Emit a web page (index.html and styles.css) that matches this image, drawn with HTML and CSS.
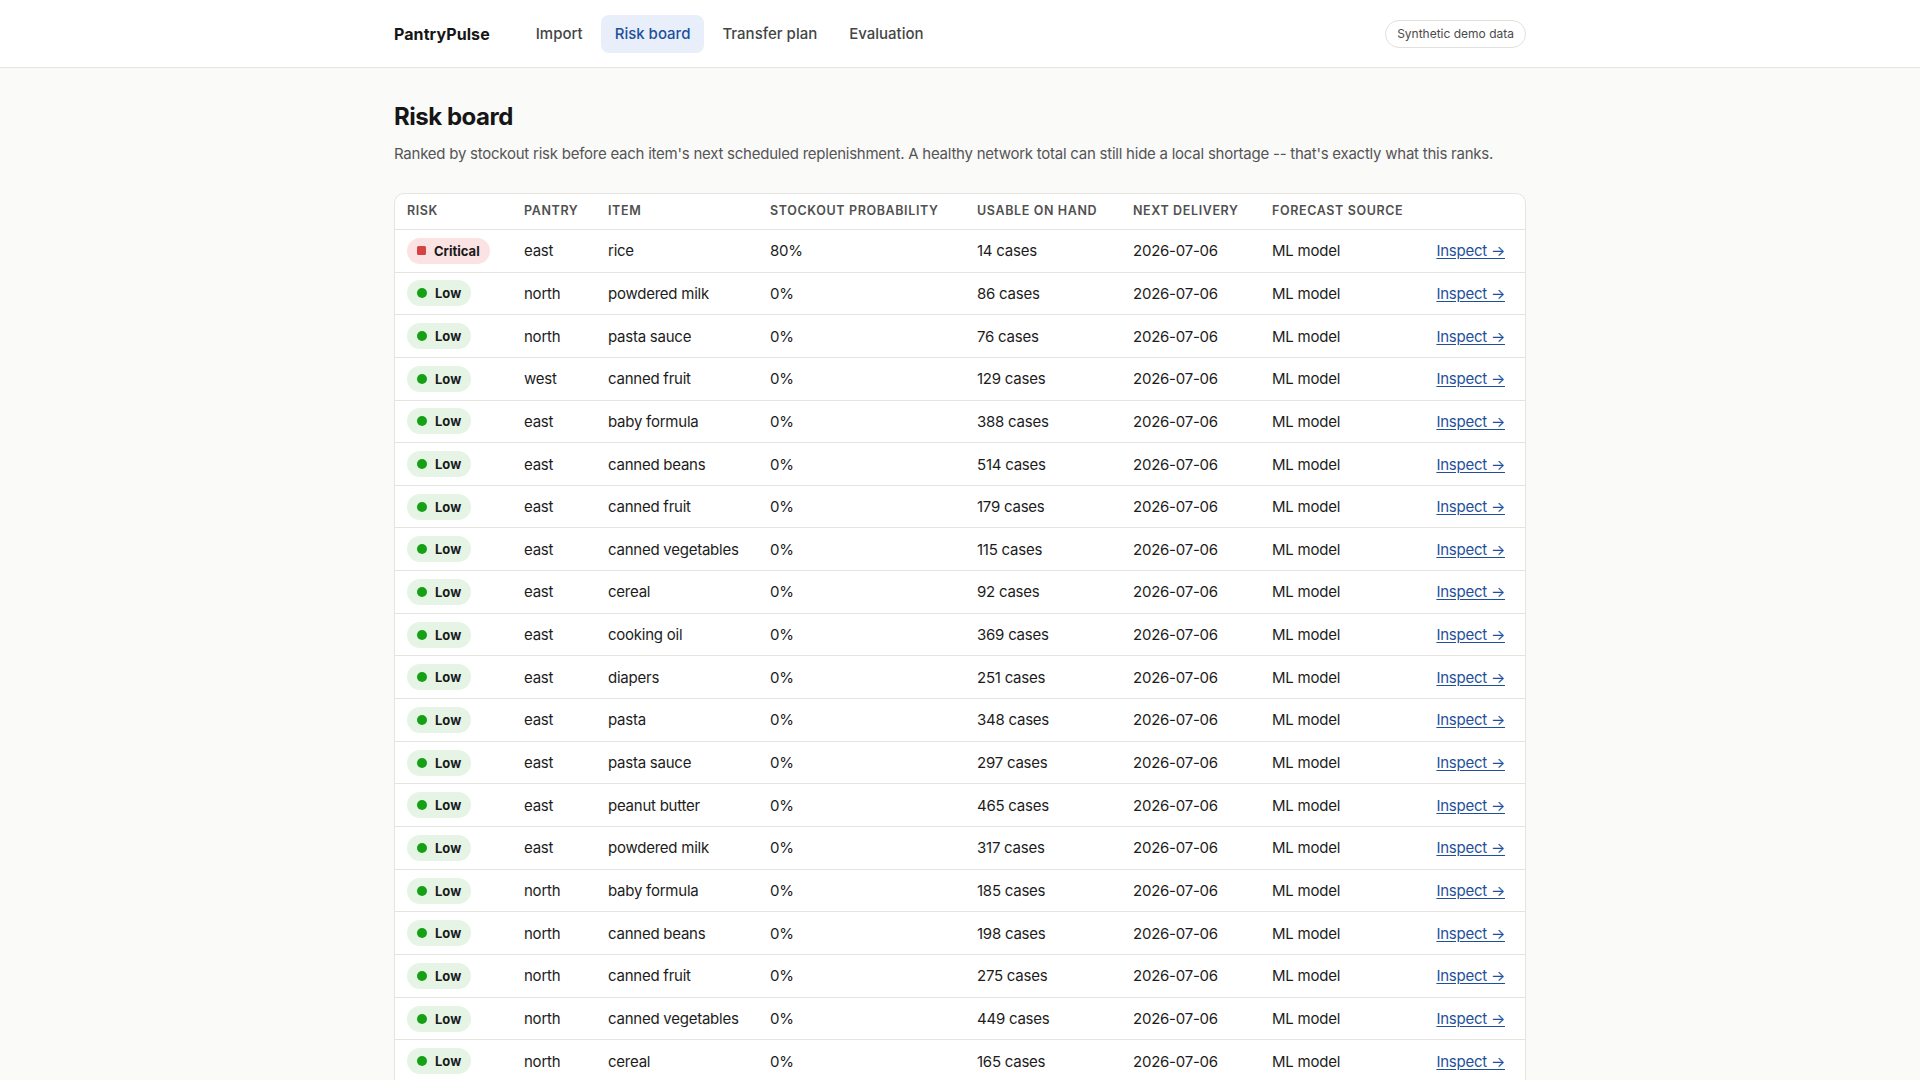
FILE: index.html
```html
<!DOCTYPE html>
<html lang="en">

<head>
    <meta charset="UTF-8">
    <meta name="viewport" content="width=device-width, initial-scale=1.0">
    <link rel="stylesheet" href="styles.css">
    <title>Risk board - PantryPulse</title>
</head>

<body>

    <header class="topbar">
        <div class="topbar-inner">
            <div class="brand">PantryPulse</div>
            <nav class="nav">
                <a href="#">Import</a>
                <a href="#" class="active">Risk board</a>
                <a href="#">Transfer plan</a>
                <a href="#">Evaluation</a>
            </nav>
            <span class="demo-tag">Synthetic demo data</span>
        </div>
    </header>

    <main class="page">
        <h1>Risk board</h1>
        <p class="lead">Ranked by stockout risk before each item's next scheduled replenishment. A healthy network total can still hide a local shortage -- that's exactly what this ranks.</p>

        <div class="table-card">
            <table class="risk-table">
                <thead>
                    <tr>
                        <th class="col-risk">Risk</th>
                        <th class="col-pantry">Pantry</th>
                        <th class="col-item">Item</th>
                        <th class="col-prob">Stockout probability</th>
                        <th class="col-hand">Usable on hand</th>
                        <th class="col-next">Next delivery</th>
                        <th class="col-source">Forecast source</th>
                        <th></th>
                    </tr>
                </thead>
                <tbody id="rows"></tbody>
            </table>
        </div>
    </main>

    <script>
        const rows = [
            ['critical', 'east', 'rice', '80%', 14],
            ['low', 'north', 'powdered milk', '0%', 86],
            ['low', 'north', 'pasta sauce', '0%', 76],
            ['low', 'west', 'canned fruit', '0%', 129],
            ['low', 'east', 'baby formula', '0%', 388],
            ['low', 'east', 'canned beans', '0%', 514],
            ['low', 'east', 'canned fruit', '0%', 179],
            ['low', 'east', 'canned vegetables', '0%', 115],
            ['low', 'east', 'cereal', '0%', 92],
            ['low', 'east', 'cooking oil', '0%', 369],
            ['low', 'east', 'diapers', '0%', 251],
            ['low', 'east', 'pasta', '0%', 348],
            ['low', 'east', 'pasta sauce', '0%', 297],
            ['low', 'east', 'peanut butter', '0%', 465],
            ['low', 'east', 'powdered milk', '0%', 317],
            ['low', 'north', 'baby formula', '0%', 185],
            ['low', 'north', 'canned beans', '0%', 198],
            ['low', 'north', 'canned fruit', '0%', 275],
            ['low', 'north', 'canned vegetables', '0%', 449],
            ['low', 'north', 'cereal', '0%', 165],
            ['low', 'north', 'cooking oil', '0%', 212],
            ['low', 'north', 'diapers', '0%', 143]
        ];

        const body = document.getElementById('rows');
        rows.forEach(([risk, pantry, item, prob, cases]) => {
            const label = risk === 'critical' ? 'Critical' : 'Low';
            const tr = document.createElement('tr');
            tr.innerHTML =
                '<td><span class="badge badge-' + risk + '"><i></i>' + label + '</span></td>' +
                '<td>' + pantry + '</td>' +
                '<td>' + item + '</td>' +
                '<td>' + prob + '</td>' +
                '<td>' + cases + ' cases</td>' +
                '<td>2026-07-06</td>' +
                '<td>ML model</td>' +
                '<td class="link-cell"><a href="#">Inspect &rarr;</a></td>';
            body.appendChild(tr);
        });
    </script>

</body>

</html>
```

FILE: styles.css
```css
body {
    font-family: Inter, 'Noto Sans', 'Liberation Sans', sans-serif;
    margin: 0;
    padding: 0;
    background-color: #fafaf9;
    color: #1c1c1c;
    letter-spacing: -0.015em;
}

.topbar {
    background-color: #fff;
    border-bottom: 1px solid #e6e4df;
}

.topbar-inner {
    max-width: 1132px;
    height: 67px;
    margin: 0 auto;
    display: flex;
    align-items: center;
}

.brand {
    font-size: 16px;
    font-weight: 700;
    color: #161616;
    letter-spacing: 0.005em;
    margin-right: 32px;
}

.nav {
    display: flex;
    gap: 4px;
}

.nav a {
    font-size: 15px;
    font-weight: 500;
    line-height: 20px;
    letter-spacing: 0;
    color: #454545;
    text-decoration: none;
    padding: 9px 14px;
    border-radius: 8px;
}

.nav a.active {
    background-color: #e8effb;
    color: #1f4f9c;
}

.demo-tag {
    margin-left: auto;
    font-size: 12px;
    color: #4a4a4a;
    line-height: 16px;
    padding: 5px 11px;
    border: 1px solid #e2e0db;
    border-radius: 14px;
    background-color: #fff;
    letter-spacing: 0;
}

.page {
    max-width: 1132px;
    margin: 0 auto;
    padding-top: 35px;
}

h1 {
    font-size: 24px;
    font-weight: 700;
    line-height: 1.2;
    letter-spacing: -0.02em;
    color: #161616;
    margin: 0 0 11px;
}

.lead {
    font-size: 15px;
    line-height: 1.5;
    color: #555;
    margin: 0 0 28px;
}

.table-card {
    background-color: #fff;
    border: 1px solid #e6e4df;
    border-radius: 10px;
    overflow: hidden;
}

.risk-table {
    width: 100%;
    border-collapse: separate;
    border-spacing: 0;
    table-layout: fixed;
    font-size: 15px;
}

.risk-table th {
    box-sizing: border-box;
    text-align: left;
    font-size: 12.5px;
    font-weight: 600;
    letter-spacing: 0.05em;
    text-transform: uppercase;
    color: #505050;
    height: 35.6px;
    padding: 0 12px 2px;
    border-bottom: 1px solid #e6e4df;
    white-space: nowrap;
}

.col-risk { width: 117px; }
.col-pantry { width: 84px; }
.col-item { width: 162px; }
.col-prob { width: 207px; }
.col-hand { width: 156px; }
.col-next { width: 139px; }
.col-source { width: 140px; }

.risk-table td {
    height: 41.66px;
    padding: 0 12px;
    border-bottom: 1px solid #e6e4df;
    color: #1c1c1c;
    white-space: nowrap;
}

.risk-table td.link-cell {
    text-align: right;
    padding-right: 20px;
}

.link-cell a {
    color: #1f4f9c;
    text-decoration: underline;
    text-underline-offset: 2px;
}

.badge {
    display: inline-flex;
    align-items: center;
    gap: 8px;
    height: 26px;
    padding: 0 10px;
    border-radius: 13px;
    font-size: 13px;
    font-weight: 700;
    color: #1a1a1a;
    letter-spacing: 0;
    vertical-align: middle;
}

.badge i {
    display: block;
    width: 9px;
    height: 9px;
}

.badge-critical {
    background-color: #fbe3e3;
}

.badge-critical i {
    background-color: #d64343;
    border-radius: 1.5px;
}

.badge-low {
    background-color: #e6f4e6;
}

.badge-low i {
    width: 10px;
    height: 10px;
    background-color: #16a016;
    border-radius: 50%;
}
```
